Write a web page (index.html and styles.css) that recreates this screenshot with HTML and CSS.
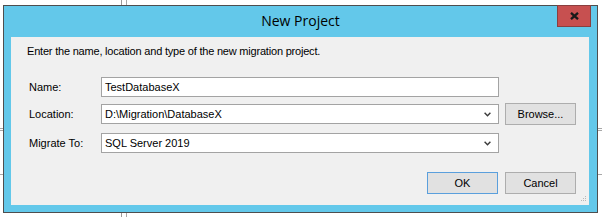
FILE: index.html
```html
<!DOCTYPE html>
<html lang="en">
<head>
<meta charset="utf-8">
<title>New Project</title>
<link rel="stylesheet" href="styles.css">
</head>
<body>
<div class="dialog">
  <div class="titlebar">
    <span class="spacer"></span>
    <h1 class="title">New Project</h1>
    <button class="close" aria-label="Close">
      <svg width="9" height="8" viewBox="0 0 9 8"><path d="M1 0.8 L8 7.2 M8 0.8 L1 7.2" stroke="#1a1a1a" stroke-width="2.3" fill="none"/></svg>
    </button>
  </div>
  <div class="client">
    <p class="intro">Enter the name, location and type of the new migration project.</p>
    <div class="form">
      <div class="row row-name">
        <label class="label">Name:</label>
        <div class="field"><span class="value">TestDatabaseX</span></div>
      </div>
      <div class="row row-location">
        <label class="label">Location:</label>
        <div class="field combo"><span class="value">D:\Migration\DatabaseX</span>
          <svg class="chev" width="7" height="5" viewBox="0 0 7 5"><path d="M0.6 0.8 L3.5 3.8 L6.4 0.8" stroke="#3a3a3a" stroke-width="1.4" fill="none"/></svg>
        </div>
        <button class="btn browse">Browse...</button>
      </div>
      <div class="row row-migrate">
        <label class="label">Migrate To:</label>
        <div class="field combo"><span class="value">SQL Server 2019</span>
          <svg class="chev" width="7" height="5" viewBox="0 0 7 5"><path d="M0.6 0.8 L3.5 3.8 L6.4 0.8" stroke="#3a3a3a" stroke-width="1.4" fill="none"/></svg>
        </div>
      </div>
    </div>
    <div class="actions">
      <button class="btn default">OK</button>
      <button class="btn">Cancel</button>
    </div>
    <svg class="grip" width="7" height="7" viewBox="0 0 7 7">
      <rect x="5" y="0" width="1" height="1" fill="#b8b8b8"/>
      <rect x="3" y="2" width="1" height="1" fill="#b8b8b8"/>
      <rect x="5" y="2" width="1" height="1" fill="#b8b8b8"/>
      <rect x="1" y="4" width="1" height="1" fill="#b8b8b8"/>
      <rect x="3" y="4" width="1" height="1" fill="#b8b8b8"/>
      <rect x="5" y="4" width="1" height="1" fill="#b8b8b8"/>
    </svg>
  </div>
</div>
</body>
</html>
```
FILE: styles.css
```css
html, body {
  margin: 0;
  padding: 0;
}
body {
  width: 602px;
  height: 217px;
  overflow: hidden;
  background:
    linear-gradient(#9a9a9a, #9a9a9a) 121px 0 / 1px 100% no-repeat,
    linear-gradient(#a8a8a8, #a8a8a8) 126px 0 / 1px 100% no-repeat,
    linear-gradient(#a8a8a8, #a8a8a8) 0 174px / 100% 1px no-repeat,
    linear-gradient(#a8a8a8, #a8a8a8) 0 128px / 100% 1px no-repeat,
    linear-gradient(#a8a8a8, #a8a8a8) 0 130px / 100% 1px no-repeat,
    #ffffff;
  font-family: "Liberation Sans", Arial, sans-serif;
  font-size: 11px;
  color: #000;
}
.dialog {
  box-sizing: border-box;
  width: 595px;
  height: 208px;
  margin: 5px 0 0 3px;
  border: 1px solid #4e4e4e;
  background: #63c8ea;
  display: flex;
  flex-direction: column;
}
.titlebar {
  height: 31px;
  display: grid;
  grid-template-columns: 1fr auto 1fr;
}
.title {
  margin: 0;
  font-family: "Open Sans", "Noto Sans", sans-serif;
  font-weight: 400;
  font-size: 14px;
  line-height: 29px;
  color: #000;
}
.close {
  justify-self: end;
  align-self: start;
  margin: -1px 6px 0 0;
  width: 34px;
  height: 22px;
  padding: 0;
  border: 1px solid #8a3f3f;
  background: #c75050;
  display: flex;
  align-items: center;
  justify-content: center;
}
.close svg {
  display: block;
}
.client {
  position: relative;
  flex: 1;
  margin: 0 8px 7px 7px;
  background: #f0f0f0;
}
.intro {
  margin: 0;
  padding: 8px 0 0 16px;
  line-height: 13px;
  letter-spacing: -0.2px;
}
.form {
  margin-top: 19px;
  padding-left: 18px;
  display: flex;
  flex-direction: column;
}
.row {
  display: flex;
  align-items: center;
}
.row-location {
  margin-top: 6px;
}
.row-migrate {
  margin-top: 8px;
}
.label {
  width: 72px;
}
.field {
  box-sizing: border-box;
  width: 398px;
  height: 20px;
  border: 1px solid #a3a3a3;
  background: #fff;
  display: flex;
  align-items: center;
  padding: 0 7px 0 3px;
}
.value {
  flex: 1;
  white-space: nowrap;
}
.chev {
  display: block;
  margin-top: 1px;
}
.btn {
  box-sizing: border-box;
  width: 71px;
  height: 22px;
  padding: 0;
  border: 1px solid #adadad;
  background: #e1e1e1;
  font-family: "Liberation Sans", Arial, sans-serif;
  font-size: 11px;
  color: #000;
}
.browse {
  margin-left: 6px;
}
.btn.default {
  border-color: #5a9fdc;
}
.actions {
  margin-top: 19px;
  padding-right: 13px;
  display: flex;
  justify-content: flex-end;
  gap: 7px;
}
.grip {
  position: absolute;
  right: 2px;
  bottom: 2px;
}
```
